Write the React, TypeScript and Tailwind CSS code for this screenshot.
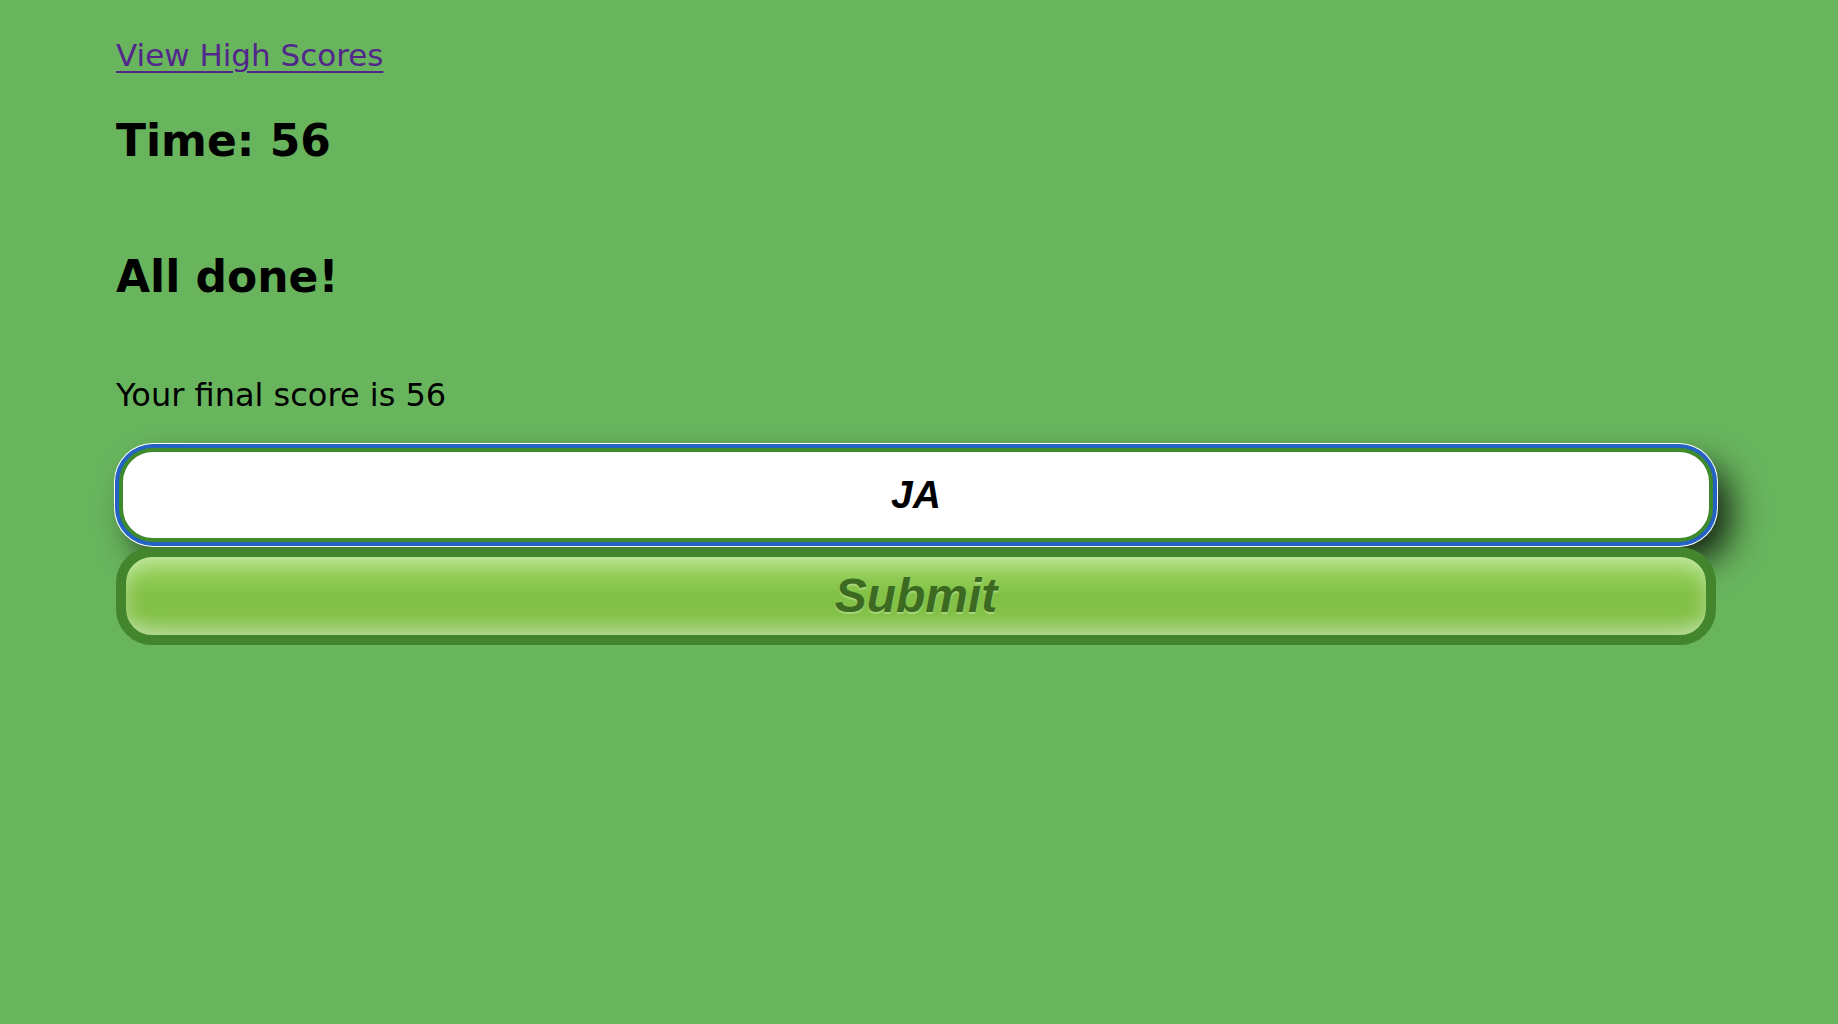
export default function App() {
    return (
        <div className="min-h-screen w-full bg-[#69b55e] font-['DejaVu_Sans',sans-serif] text-black">
            <div className="ml-[116px] w-[1600px] pt-[35px]">
                <a href="#" className="block h-[40px] text-[31px] leading-[40px] text-[#52278c] underline decoration-[2px] underline-offset-[5px]">
                    View High Scores
                </a>
                <h2 className="mt-[40px] text-[44px] font-bold leading-[52px]">Time: 56</h2>
                <h2 className="mt-[84px] text-[44px] font-bold leading-[52px]">All done!</h2>
                <p className="mt-[72px] text-[32px] leading-[40px]">Your final score is 56</p>
                <input
                    type="text"
                    defaultValue="JA"
                    className="mx-[3px] mt-[33px] block h-[94px] w-[1594px] rounded-[34px] border-4 border-[#3e8a2c] bg-white text-center font-['Liberation_Sans',Arial,sans-serif] text-[39px] font-bold italic text-black shadow-[0_0_0_4px_#2463c4,0_0_0_5px_#ffffff,16px_18px_36px_rgba(0,0,0,0.85)] outline-none"
                />
                <button
                    type="button"
                    className="mt-[5px] block h-[98px] w-[1600px] rounded-[36px] border-[10px] border-[#43852c] bg-[linear-gradient(to_bottom,#abde7b_0%,#8fcb54_28%,#82c146_48%,#83c148_72%,#9ecd71_100%)] font-['Liberation_Sans',Arial,sans-serif] text-[48px] font-bold italic text-[#3b6a20] shadow-[inset_0_0_20px_rgba(255,255,255,0.4)] [text-shadow:0_2px_1px_#a6d67a]"
                >
                    Submit
                </button>
            </div>
        </div>
    );
}
